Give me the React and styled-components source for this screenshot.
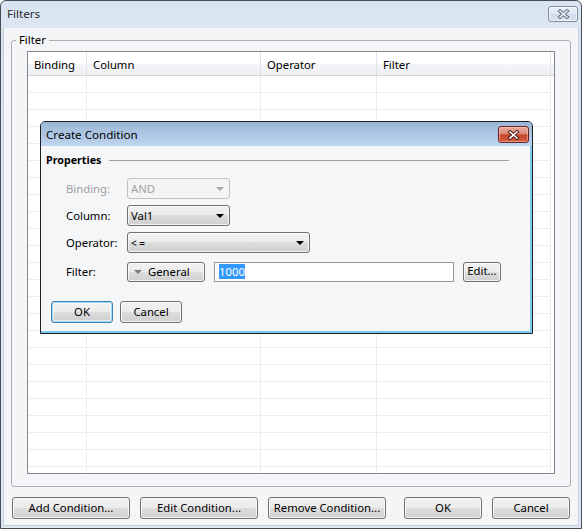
import React from "react";
import styled, { createGlobalStyle, css } from "styled-components";

const GlobalStyle = createGlobalStyle`
  html, body { margin: 0; padding: 0; background: #ffffff; }
  body {
    font-family: "Noto Sans", "Open Sans", sans-serif;
    font-size: 11.3px;
    color: #000;
  }
  * { box-sizing: border-box; }
`;

const COLUMNS = [
  { title: "Binding", width: 59 },
  { title: "Column", width: 174 },
  { title: "Operator", width: 116 },
  { title: "Filter", width: 174 },
];

const ROW_COUNT = 24;

const winButton = css`
  border: 1px solid #707070;
  border-radius: 3px;
  background: linear-gradient(#f2f2f2 0%, #ebebeb 50%, #dddddd 50%, #cfcfcf 100%);
  box-shadow: inset 0 0 0 1px rgba(255, 255, 255, 0.75);
  font-family: inherit;
  font-size: 11.3px;
  color: #000;
  padding: 0;
  cursor: default;
`;

const Window = styled.div`
  position: relative;
  width: 582px;
  height: 529px;
  border: 1px solid #464c56;
  border-radius: 6px 6px 0 0;
  background: linear-gradient(#d9e4f1 0px, #dbe6f2 28px, #dfe8f3 100%);
  display: flex;
  flex-direction: column;
  overflow: hidden;
`;

const TitleBar = styled.div`
  height: 27px;
  flex: none;
  display: flex;
  align-items: flex-start;
  justify-content: space-between;
  padding: 0 3px 0 6px;
`;

const TitleText = styled.span`
  line-height: 25px;
  font-size: 11.6px;
  color: #2a2a2a;
`;

const WinClose = styled.div`
  width: 30px;
  height: 16px;
  margin-top: 5px;
  border: 1px solid #7e8ca2;
  border-radius: 3px;
  background: linear-gradient(#edf2f8 0%, #dfe7f1 50%, #d2dcea 51%, #dae3ef 100%);
  box-shadow: inset 0 0 0 1px rgba(255, 255, 255, 0.6);
  display: flex;
  align-items: center;
  justify-content: center;
`;

const Client = styled.div`
  flex: 1;
  margin: 0 2px 2px 2px;
  border: 1px solid #c3cfdd;
  border-top: none;
  background: #f4f5f7;
  padding: 4px 7px 6px 7px;
  display: flex;
  flex-direction: column;
`;

const Group = styled.fieldset`
  margin: 0;
  padding: 3px 0 12px 0;
  min-inline-size: 0;
  border: 1px solid #abaeb3;
  border-radius: 3px;
`;

const Legend = styled.legend`
  margin-left: 4px;
  padding: 0 3px;
  line-height: 16px;
`;

const Grid = styled.div`
  height: 423px;
  margin: 0 15px;
  border: 1px solid #828790;
  background: #ffffff;
  overflow: hidden;
`;

const HeaderRow = styled.div`
  display: flex;
  height: 24px;
  border-bottom: 1px solid #d5d5d5;
  background: linear-gradient(#ffffff 0%, #ffffff 50%, #f4f5f7 51%, #eef0f3 100%);
`;

const HeaderCell = styled.div`
  flex: none;
  width: ${(p) => p.$w}px;
  border-right: 1px solid #e2e3e6;
  padding: 2px 0 0 6px;
  line-height: 21px;
  color: #000;
`;

const HeaderFill = styled.div`
  flex: 1;
`;

const BodyRow = styled.div`
  display: flex;
  height: 17px;
`;

const BodyCell = styled.div`
  flex: none;
  width: ${(p) => p.$w}px;
  border-right: 1px solid #ededed;
  border-bottom: 1px solid #ededed;
`;

const ButtonBar = styled.div`
  margin-top: 10px;
  display: flex;
  justify-content: space-between;
  padding: 0 1px;
`;

const ButtonGroup = styled.div`
  display: flex;
  gap: 10px;
`;

const Button = styled.button`
  ${winButton}
  width: ${(p) => p.$w}px;
  height: ${(p) => p.$h || 22}px;
  padding-bottom: 2px;
  ${(p) =>
    p.$default &&
    css`
      border-color: #3c7fb1;
      box-shadow: inset 0 0 0 1px #9fdcf7, inset 0 0 0 2px rgba(255, 255, 255, 0.5);
    `}
`;

/* Create Condition dialog, floating over the grid */
const Dialog = styled.div`
  position: absolute;
  left: 39px;
  top: 120px;
  width: 493px;
  height: 213px;
  border: 1px solid #1f1f1f;
  border-radius: 5px 5px 0 0;
  background: #f5f6f8;
  box-shadow: inset -2px -2px 0 #7cc8ee;
  overflow: hidden;
  display: flex;
  flex-direction: column;
`;

const DialogTitle = styled.div`
  height: 24px;
  flex: none;
  display: flex;
  justify-content: space-between;
  align-items: flex-start;
  padding: 0 3px 0 5px;
  background: linear-gradient(#9ab5d5 0%, #adc6e3 50%, #bed5ee 100%);
`;

const DialogTitleText = styled.span`
  line-height: 25px;
  font-size: 11.6px;
  color: #000;
`;

const RedClose = styled.div`
  width: 31px;
  height: 17px;
  margin-top: 4px;
  border: 1px solid #6a2424;
  border-radius: 3px;
  background: linear-gradient(#eaaa9b 0%, #dd8a77 45%, #c8472f 52%, #d35c3f 100%);
  box-shadow: inset 0 0 0 1px rgba(255, 210, 200, 0.5);
  display: flex;
  align-items: center;
  justify-content: center;
`;

const DialogBody = styled.div`
  padding: 6px 23px 0 5px;
`;

const SectionHeader = styled.div`
  display: flex;
  align-items: center;
  gap: 8px;
  height: 16px;
  font-weight: 700;
  font-size: 10.7px;
`;

const SectionLine = styled.div`
  flex: 1;
  height: 1px;
  background: #a0a0a0;
`;

const Form = styled.div`
  margin-top: 10px;
  padding-left: 20px;
  display: flex;
  flex-direction: column;
  gap: 6px;
`;

const FormRow = styled.div`
  display: flex;
  align-items: center;
  height: 21px;
  margin-top: ${(p) => p.$mt || 0}px;
`;

const Label = styled.div`
  width: 61px;
  flex: none;
  color: ${(p) => (p.$disabled ? "#9d9d9d" : "#000")};
`;

const Combo = styled.div`
  ${winButton}
  width: ${(p) => p.$w}px;
  height: 21px;
  display: flex;
  align-items: center;
  justify-content: space-between;
  padding: 0 5px 0 3px;
  font-size: ${(p) => (p.$small ? 10 : 11.3)}px;
  ${(p) =>
    p.$disabled &&
    css`
      border-color: #c2c2c2;
      background: #f4f4f4;
      box-shadow: none;
      color: #a3a3a3;
    `}
`;

const Arrow = styled.span`
  width: 0;
  height: 0;
  border-left: 4px solid transparent;
  border-right: 4px solid transparent;
  border-top: 4px solid ${(p) => p.$color || "#000"};
`;

const TypeButton = styled.div`
  ${winButton}
  width: 78px;
  height: 20px;
  display: flex;
  align-items: center;
  gap: 6px;
  padding-left: 6px;
`;

const TextBox = styled.div`
  width: 240px;
  height: 20px;
  margin-left: 9px;
  border: 1px solid #959595;
  background: #ffffff;
  display: flex;
  align-items: center;
  padding-left: 4px;
`;

const Selected = styled.span`
  background: #3399ff;
  color: #ffffff;
  line-height: 15px;
`;

const EditButton = styled(Button)`
  margin-left: 9px;
`;

const DialogButtons = styled.div`
  margin-top: 19px;
  padding-left: 5px;
  display: flex;
  gap: 7px;
`;

const CloseGlyph = ({ outline, fill }) => (
  <svg width="13" height="10" viewBox="0 0 13 10">
    <path d="M3 2 L10 8 M10 2 L3 8" stroke={outline} strokeWidth="3.6" strokeLinecap="square" />
    <path d="M3 2 L10 8 M10 2 L3 8" stroke={fill} strokeWidth="1.6" strokeLinecap="square" />
  </svg>
);

const App = () => {
  return (
    <>
      <GlobalStyle />
      <Window>
        <TitleBar>
          <TitleText>Filters</TitleText>
          <WinClose>
            <CloseGlyph outline="#5d6c82" fill="#eef2f7" />
          </WinClose>
        </TitleBar>
        <Client>
          <Group>
            <Legend>Filter</Legend>
            <Grid>
              <HeaderRow>
                {COLUMNS.map((c) => (
                  <HeaderCell key={c.title} $w={c.width}>
                    {c.title}
                  </HeaderCell>
                ))}
                <HeaderFill />
              </HeaderRow>
              {Array.from({ length: ROW_COUNT }).map((_, i) => (
                <BodyRow key={i}>
                  {COLUMNS.map((c) => (
                    <BodyCell key={c.title} $w={c.width} />
                  ))}
                </BodyRow>
              ))}
            </Grid>
          </Group>
          <ButtonBar>
            <ButtonGroup>
              <Button $w={118}>Add Condition...</Button>
              <Button $w={118}>Edit Condition...</Button>
              <Button $w={118}>Remove Condition...</Button>
            </ButtonGroup>
            <ButtonGroup>
              <Button $w={78}>OK</Button>
              <Button $w={78}>Cancel</Button>
            </ButtonGroup>
          </ButtonBar>
        </Client>

        <Dialog>
          <DialogTitle>
            <DialogTitleText>Create Condition</DialogTitleText>
            <RedClose>
              <CloseGlyph outline="#4a1a1a" fill="#ffffff" />
            </RedClose>
          </DialogTitle>
          <DialogBody>
            <SectionHeader>
              Properties
              <SectionLine />
            </SectionHeader>
            <Form>
              <FormRow>
                <Label $disabled>Binding:</Label>
                <Combo $w={103} $disabled>
                  AND
                  <Arrow $color="#a8a8a8" />
                </Combo>
              </FormRow>
              <FormRow>
                <Label>Column:</Label>
                <Combo $w={103}>
                  Val1
                  <Arrow />
                </Combo>
              </FormRow>
              <FormRow>
                <Label>Operator:</Label>
                <Combo $w={183} $small>
                  &lt; =
                  <Arrow />
                </Combo>
              </FormRow>
              <FormRow $mt={2}>
                <Label>Filter:</Label>
                <TypeButton>
                  <Arrow $color="#7b7b7b" />
                  General
                </TypeButton>
                <TextBox>
                  <Selected>1000</Selected>
                </TextBox>
                <EditButton $w={38} $h={20}>
                  Edit...
                </EditButton>
              </FormRow>
            </Form>
            <DialogButtons>
              <Button $w={62} $default>
                OK
              </Button>
              <Button $w={62}>Cancel</Button>
            </DialogButtons>
          </DialogBody>
        </Dialog>
      </Window>
    </>
  );
};

export default App;
